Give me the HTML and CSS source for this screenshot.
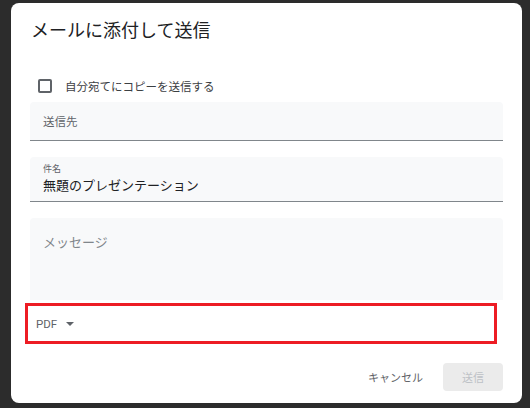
FILE: index.html
```html
<!DOCTYPE html>
<html lang="ja">
<head>
<meta charset="utf-8">
<link rel="stylesheet" href="styles.css">
</head>
<body>
<div class="dialog">
  <h1 class="title">メールに添付して送信</h1>
  <label class="check-row">
    <span class="checkbox"></span>
    <span class="check-label">自分宛てにコピーを送信する</span>
  </label>
  <div class="field field-to">
    <span class="placeholder-sm">送信先</span>
  </div>
  <div class="field field-subject">
    <span class="field-label">件名</span>
    <span class="field-value">無題のプレゼンテーション</span>
  </div>
  <div class="field field-message">
    <span class="placeholder">メッセージ</span>
  </div>
  <div class="format-row">
    <span class="format">PDF</span>
    <svg class="caret" width="8" height="4" viewBox="0 0 8 4"><path d="M0 0h8L4 4z" fill="#5f6368"/></svg>
  </div>
  <div class="actions">
    <button class="btn-text">キャンセル</button>
    <button class="btn-send">送信</button>
  </div>
</div>
</body>
</html>
```
FILE: styles.css
```css
html, body {
  margin: 0;
  padding: 0;
}
body {
  width: 530px;
  height: 408px;
  background: #2c2c2c;
  font-family: "Noto Sans CJK JP", Roboto, "Noto Sans", sans-serif;
  overflow: hidden;
}
.dialog {
  box-sizing: border-box;
  margin: 3px 0 0 11px;
  width: 511px;
  height: 400px;
  background: #fff;
  border-radius: 8px;
  padding: 14px 19px 0 19px;
  display: flex;
  flex-direction: column;
}
.title {
  margin: 0 0 0 1px;
  font-size: 18px;
  line-height: 24px;
  font-weight: 400;
  color: #202124;
}
.check-row {
  display: flex;
  align-items: center;
  margin-top: 34px;
  padding-left: 8px;
  height: 22px;
}
.checkbox {
  box-sizing: border-box;
  width: 14px;
  height: 14px;
  border: 2px solid #5f6368;
  border-radius: 2px;
}
.check-label {
  margin-left: 13px;
  font-size: 11.5px;
  color: #3c4043;
}
.field {
  box-sizing: border-box;
  background: #f8f9fa;
  border-radius: 4px 4px 0 0;
  padding-left: 13px;
}
.field-to {
  margin-top: 5px;
  height: 39px;
  border-bottom: 1px solid #80868b;
  display: flex;
  align-items: center;
}
.placeholder-sm {
  font-size: 11.5px;
  color: #5f6368;
}
.field-subject {
  margin-top: 16px;
  height: 45px;
  border-bottom: 1px solid #80868b;
  display: flex;
  flex-direction: column;
  padding-top: 6px;
}
.field-label {
  font-size: 9px;
  line-height: 12px;
  color: #5f6368;
}
.field-value {
  font-size: 13px;
  line-height: 19px;
  color: #202124;
}
.field-message {
  margin-top: 16px;
  height: 82px;
  padding-top: 10px;
}
.placeholder {
  font-size: 13px;
  line-height: 20px;
  color: #80868b;
}
.format-row {
  box-sizing: border-box;
  margin: 3px 6px 0 -5px;
  height: 41px;
  border: 3px solid #ed1c24;
  display: flex;
  align-items: center;
  padding-left: 8px;
}
.format {
  font-family: Roboto, "Noto Sans", sans-serif;
  font-size: 11.5px;
  color: #5f6368;
}
.caret {
  margin-left: 9px;
  margin-top: 1px;
}
.actions {
  display: flex;
  justify-content: flex-end;
  align-items: center;
  margin-top: 19px;
}
.btn-text, .btn-send {
  font-family: "Noto Sans CJK JP", sans-serif;
  font-size: 11px;
  border: none;
  padding: 0;
  cursor: pointer;
}
.btn-text {
  background: transparent;
  color: #5f6368;
  margin-right: 20px;
}
.btn-send {
  width: 60px;
  height: 28px;
  border-radius: 4px;
  background: #ebebeb;
  color: #bdc1c6;
}
```
